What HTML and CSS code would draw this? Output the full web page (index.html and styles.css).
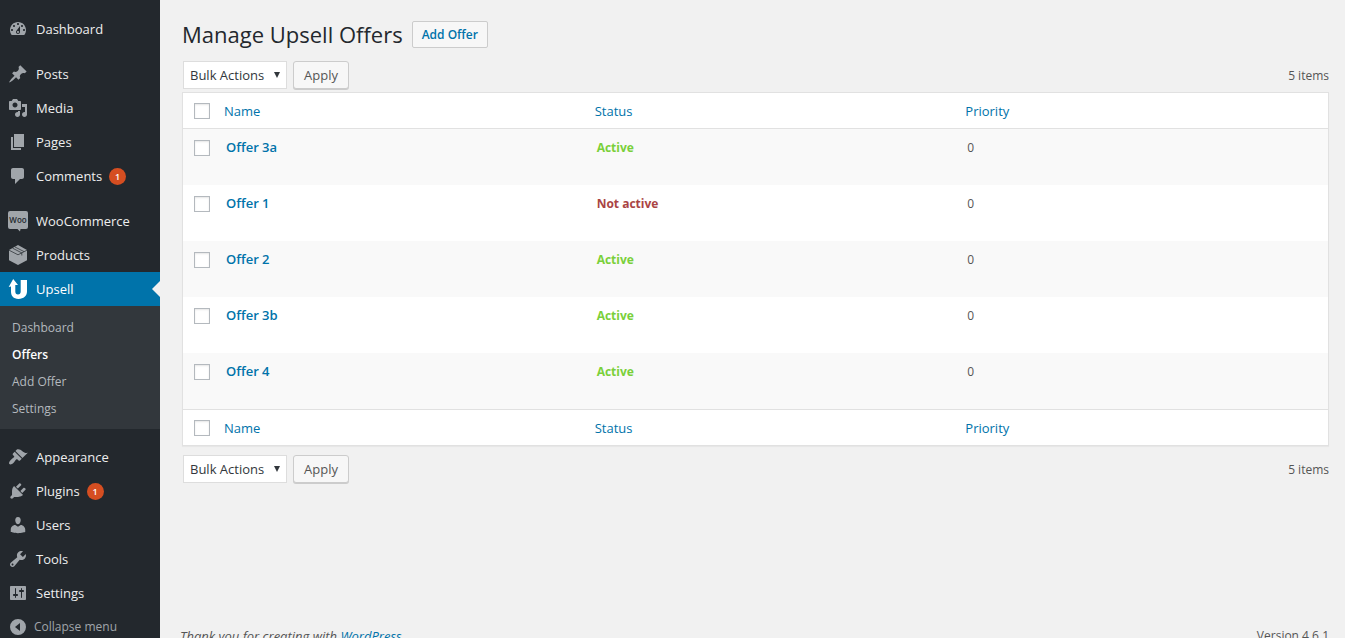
FILE: index.html
```html
<!DOCTYPE html>
<html lang="en">
<head>
<meta charset="utf-8">
<title>Manage Upsell Offers</title>
<link rel="stylesheet" href="styles.css">
</head>
<body>
<div class="admin">
  <nav class="sidebar" aria-label="Main menu">
    <ul class="menu">
      <li><a class="menu-link" href="#"><svg class="icon" viewBox="0 0 20 20"><path d="M3.76 16h12.48c1.1-1.37 1.76-3.11 1.76-5 0-4.42-3.58-8-8-8s-8 3.58-8 8c0 1.89.66 3.63 1.76 5zM10 4c.55 0 1 .45 1 1s-.45 1-1 1-1-.45-1-1 .45-1 1-1zM6 6c.55 0 1 .45 1 1s-.45 1-1 1-1-.45-1-1 .45-1 1-1zm8 0c.55 0 1 .45 1 1s-.45 1-1 1-1-.45-1-1 .45-1 1-1zm-5.37 5.55L12 7v6c0 1.1-.9 2-2 2s-2-.9-2-2c0-.57.24-1.08.63-1.45zM4 10c.55 0 1 .45 1 1s-.45 1-1 1-1-.45-1-1 .45-1 1-1zm12 0c.55 0 1 .45 1 1s-.45 1-1 1-1-.45-1-1 .45-1 1-1zm-5 3c0-.55-.45-1-1-1s-1 .45-1 1 .45 1 1 1 1-.45 1-1z"/></svg>Dashboard</a></li>
      <li class="gap"><a class="menu-link" href="#"><svg class="icon" viewBox="0 0 20 20"><path d="M10.44 3.02l1.82-1.82 6.36 6.35-1.83 1.82c-1.05-.68-2.48-.57-3.41.36l-.75.75c-.92.93-1.04 2.35-.35 3.41l-1.83 1.82-2.41-2.41-2.8 2.79c-.42.42-3.38 2.71-3.8 2.29s1.86-3.39 2.28-3.81l2.79-2.79L4.1 9.36l1.83-1.82c1.05.69 2.48.57 3.4-.36l.75-.75c.93-.92 1.05-2.35.36-3.41z"/></svg>Posts</a></li>
      <li><a class="menu-link" href="#"><svg class="icon" viewBox="0 0 20 20"><path d="M13 11V4c0-.55-.45-1-1-1h-1.670L9 1H5L3.670 3H2c-.55 0-1 .45-1 1v7c0 .55.45 1 1 1h10c.55 0 1-.45 1-1zM7 4.500c1.380 0 2.500 1.120 2.500 2.500S8.380 9.500 7 9.500 4.500 8.380 4.500 7 5.620 4.500 7 4.500zM14 6h5v10.500c0 1.380-1.120 2.500-2.500 2.500S14 17.880 14 16.500s1.120-2.500 2.500-2.500c.17 0 .34.02.5.05V9h-3V6zm-4 8.050V13h2v3.500c0 1.380-1.120 2.500-2.500 2.500S7 17.880 7 16.500 8.120 14 9.500 14c.17 0 .34.02.5.05z"/></svg>Media</a></li>
      <li><a class="menu-link" href="#"><svg class="icon" viewBox="0 0 20 20"><path d="M6 15V2h10v13H6zm-1 1h8v2H3V5h2v11z"/></svg>Pages</a></li>
      <li><a class="menu-link" href="#"><svg class="icon" viewBox="0 0 20 20"><path d="M5 2h9c1.100 0 2 .9 2 2v7c0 1.100-.9 2-2 2h-2l-5 5v-5H5c-1.100 0-2-.9-2-2V4c0-1.100.9-2 2-2z"/></svg>Comments <span class="count">1</span></a></li>
      <li class="gap"><a class="menu-link" href="#"><svg class="icon" viewBox="0 0 20 20"><path d="M2 0h16a2 2 0 0 1 2 2v14a2 2 0 0 1-2 2h-5.500l-.5 2.500L9.500 18H2a2 2 0 0 1-2-2V2a2 2 0 0 1 2-2z"/><text class="woo" x="10" y="12" text-anchor="middle">Woo</text></svg>WooCommerce</a></li>
      <li><a class="menu-link" href="#"><svg class="icon" viewBox="0 0 20 20"><path d="M10 0l9 5v10.200L10 20l-9-4.800V5z"/><path class="icon-line" d="M1 5.200l9 4.600 9-4.600M4.600 3.200l9.200 4.700v2.600M7 2l9 4.600"/></svg>Products</a></li>
      <li><a class="menu-link current" href="#" aria-current="true"><svg class="icon" viewBox="0 0 20 20"><path d="M5.200 0L10 6H7.300v6.600c0 1.800 1 2.900 2.700 2.900s2.700-1.100 2.700-2.900V1H19v11.600c0 4.300-3.300 7.400-8.500 7.400S3 17 3 12.600V7.500L.7 8z"/></svg>Upsell</a>
        <ul class="submenu">
          <li><a href="#">Dashboard</a></li>
          <li><a class="selected" href="#" aria-current="page">Offers</a></li>
          <li><a href="#">Add Offer</a></li>
          <li><a href="#">Settings</a></li>
        </ul>
      </li>
      <li class="gap"><a class="menu-link" href="#"><svg class="icon" viewBox="0 0 20 20"><path d="M14.480 11.060L7.410 3.990l1.500-1.500c.5-.56 2.300-.47 3.510.32 1.210.8 1.430 1.280 2.910 2.100 1.180.64 2.450 1.260 4.450.85zm-.71.71L6.700 4.700 4.930 6.470c-.39.39-.39 1.020 0 1.410l1.060 1.060c.39.39.39 1.030 0 1.420-.6.6-1.430 1.110-2.210 1.690-.35.26-.7.53-1.010.84C1.430 14.230.4 16.080 1.400 17.070c.99 1 2.840-.03 4.180-1.360.31-.31.58-.66.85-1.020.57-.78 1.080-1.610 1.690-2.210.39-.39 1.020-.39 1.410 0l1.060 1.060c.39.39 1.020.39 1.410 0z"/></svg>Appearance</a></li>
      <li><a class="menu-link" href="#"><svg class="icon" viewBox="0 0 20 20"><path d="M13.110 4.360L9.870 7.600 8 5.730l3.240-3.240c.35-.34 1.050-.2 1.560.32.52.51.66 1.210.31 1.550zm-8 1.770l.91-1.120 9.010 9.010-1.190.84c-.71.71-2.630 1.160-3.820 1.160H6.140L4.900 17.260c-.59.59-1.540.59-2.120 0-.59-.58-.59-1.530 0-2.120l1.240-1.240v-3.880c0-1.130.4-3.190 1.090-3.890zm7.260 3.970l3.240-3.240c.34-.35 1.040-.21 1.550.31.52.51.66 1.210.31 1.550l-3.240 3.250z"/></svg>Plugins <span class="count">1</span></a></li>
      <li><a class="menu-link" href="#"><svg class="icon" viewBox="0 0 20 20"><path d="M10 9.250c-2.270 0-2.730-3.440-2.730-3.440C7 4.020 7.820 2 9.970 2c2.160 0 2.980 2.020 2.710 3.810 0 0-.41 3.440-2.680 3.440zm0 2.570L12.720 10c2.390 0 4.520 2.330 4.520 4.530v2.490s-3.650 1.130-7.240 1.130c-3.650 0-7.240-1.130-7.240-1.130v-2.490c0-2.250 1.940-4.480 4.470-4.480z"/></svg>Users</a></li>
      <li><a class="menu-link" href="#"><svg class="icon" viewBox="0 0 20 20"><path d="M16.680 9.770c-1.340 1.340-3.300 1.670-4.950.99l-5.410 6.520c-.99.99-2.590.99-3.580 0s-.99-2.590 0-3.570l6.520-5.420c-.68-1.650-.35-3.610.99-4.950 1.280-1.280 3.120-1.620 4.720-1.060l-2.890 2.890 2.820 2.820 2.860-2.870c.53 1.580.18 3.390-1.080 4.650zM3.810 16.210c.4.39 1.040.39 1.430 0 .4-.4.4-1.040 0-1.430-.39-.4-1.030-.4-1.430 0-.39.39-.39 1.030 0 1.430z"/></svg>Tools</a></li>
      <li><a class="menu-link" href="#"><svg class="icon" viewBox="0 0 20 20"><path d="M18 16V4c0-.55-.45-1-1-1H3c-.55 0-1 .45-1 1v12c0 .55.45 1 1 1h14c.55 0 1-.45 1-1zM8 11h1c.55 0 1 .45 1 1s-.45 1-1 1H8v1.500c0 .28-.22.5-.5.5s-.5-.22-.5-.5V13H6c-.55 0-1-.45-1-1s.45-1 1-1h1V5.500c0-.28.22-.5.5-.5s.5.22.5.5V11zm5-2h-1c-.55 0-1-.45-1-1s.45-1 1-1h1V5.500c0-.28.22-.5.5-.5s.5.22.5.5V7h1c.55 0 1 .45 1 1s-.45 1-1 1h-1v5.500c0 .28-.22.5-.5.5s-.5-.22-.5-.5V9z"/></svg>Settings</a></li>
      <li><button class="menu-link collapse" type="button"><svg class="icon" viewBox="0 0 20 20"><path fill-rule="evenodd" d="M10 2a8 8 0 1 1 0 16 8 8 0 0 1 0-16zM12 6l-5 4 5 4z"/></svg>Collapse menu</button></li>
    </ul>
  </nav>

  <div class="content">
    <main>
      <header class="page-head">
        <h1>Manage Upsell Offers</h1>
        <a class="add-button" href="#">Add Offer</a>
      </header>

      <div class="tablenav">
        <span class="select-box"><select aria-label="Bulk actions, top"><option>Bulk Actions</option></select></span>
        <button class="apply" type="button">Apply</button>
        <span class="total">5 items</span>
      </div>

      <table class="offers">
        <colgroup><col class="col-check"><col><col><col></colgroup>
        <thead>
          <tr><td><input type="checkbox" aria-label="Select all"></td><th scope="col"><a href="#">Name</a></th><th scope="col"><a href="#">Status</a></th><th scope="col"><a href="#">Priority</a></th></tr>
        </thead>
        <tbody>
          <tr><td><input type="checkbox" aria-label="Select Offer 3a"></td><td><a class="name" href="#">Offer 3a</a></td><td><strong class="on">Active</strong></td><td>0</td></tr>
          <tr><td><input type="checkbox" aria-label="Select Offer 1"></td><td><a class="name" href="#">Offer 1</a></td><td><strong class="off">Not active</strong></td><td>0</td></tr>
          <tr><td><input type="checkbox" aria-label="Select Offer 2"></td><td><a class="name" href="#">Offer 2</a></td><td><strong class="on">Active</strong></td><td>0</td></tr>
          <tr><td><input type="checkbox" aria-label="Select Offer 3b"></td><td><a class="name" href="#">Offer 3b</a></td><td><strong class="on">Active</strong></td><td>0</td></tr>
          <tr><td><input type="checkbox" aria-label="Select Offer 4"></td><td><a class="name" href="#">Offer 4</a></td><td><strong class="on">Active</strong></td><td>0</td></tr>
        </tbody>
        <tfoot>
          <tr><td><input type="checkbox" aria-label="Select all, bottom"></td><th scope="col"><a href="#">Name</a></th><th scope="col"><a href="#">Status</a></th><th scope="col"><a href="#">Priority</a></th></tr>
        </tfoot>
      </table>

      <div class="tablenav bottom">
        <span class="select-box"><select aria-label="Bulk actions, bottom"><option>Bulk Actions</option></select></span>
        <button class="apply" type="button">Apply</button>
        <span class="total">5 items</span>
      </div>
    </main>
    <footer class="footer">
      <em>Thank you for creating with <a href="#">WordPress</a>.</em>
      <span>Version 4.6.1</span>
    </footer>
  </div>
</div>
</body>
</html>
```

FILE: styles.css
```css
* { box-sizing: border-box; }

body {
  margin: 0;
  background: #f1f1f1;
  color: #555;
  font: 12px/20px "Open Sans", "Noto Sans", sans-serif;
}

a { color: #0073aa; text-decoration: none; }

.admin { display: flex; height: 100vh; overflow: hidden; }

/* Sidebar */
.sidebar { flex: none; width: 160px; background: #23282d; }
.menu, .submenu { margin: 0; padding: 0; list-style: none; }
.menu { padding-top: 12px; }
.gap { margin-top: 11px; }

.menu-link {
  position: relative;
  display: flex;
  align-items: center;
  gap: 8px;
  width: 100%;
  height: 34px;
  padding: 0 8px;
  border: 0;
  background: none;
  color: #eee;
  font: inherit;
  font-size: 13px;
}
.icon { flex: none; width: 20px; height: 20px; overflow: visible; fill: #a0a5aa; }
.icon-line { fill: none; stroke: #23282d; stroke-width: 0.7; }
.woo { fill: #23282d; font: 600 8px "Open Sans", sans-serif; }

.current { background: #0073aa; color: #fff; }
.current .icon { fill: #fff; }
.current::after {
  content: "";
  position: absolute;
  top: 9px;
  right: 0;
  border: 8px solid transparent;
  border-left: 0;
  border-right-color: #f1f1f1;
}

.count {
  width: 17px;
  margin-left: -1px;
  border-radius: 9px;
  background: #d54e21;
  color: #fff;
  font-size: 9px;
  font-weight: 600;
  line-height: 17px;
  text-align: center;
}
.collapse { gap: 6px; color: #a0a5aa; font-size: 12px; }

.submenu { padding: 8px 0 7px; background: #32373c; }
.submenu a { display: block; padding: 0 12px; color: #b4b9be; line-height: 27px; }
.submenu .selected { color: #fff; font-weight: 600; }

/* Main area */
.content {
  flex: 1;
  display: flex;
  flex-direction: column;
  justify-content: space-between;
  padding: 21px 16px 0 22px;
}

.page-head { display: flex; align-items: center; gap: 9px; }
h1 { margin: 0; color: #23282d; font-size: 22px; font-weight: 400; line-height: 27px; }
.add-button {
  padding: 0 9px;
  border: 1px solid #ccc;
  border-radius: 2px;
  background: #f7f7f7;
  font-weight: 600;
  line-height: 25px;
}

.tablenav { display: flex; align-items: flex-start; gap: 6px; margin: 13px 0 2px; padding-left: 1px; }
.bottom { margin-top: 9px; }
.select-box { position: relative; }
.select-box::after {
  content: "";
  position: absolute;
  top: 11px;
  right: 7px;
  width: 6px;
  height: 6px;
  background: #32373c;
  clip-path: polygon(0 0, 100% 0, 50% 100%);
  pointer-events: none;
}
select {
  display: block;
  appearance: none;
  width: 104px;
  height: 28px;
  padding: 0 6px;
  border: 1px solid #ddd;
  border-radius: 0;
  background: #fff;
  color: #32373c;
  font: inherit;
  font-size: 13px;
}
.apply {
  height: 28px;
  padding: 0 10px;
  border: 1px solid #ccc;
  border-radius: 3px;
  background: #f7f7f7;
  box-shadow: 0 1px 0 #ccc;
  color: #555;
  font: inherit;
  font-size: 13px;
}
.total { margin-left: auto; line-height: 29px; }

.offers {
  width: 100%;
  border: 1px solid #e1e1e1;
  border-spacing: 0;
  table-layout: fixed;
  background: #fff;
  box-shadow: 0 1px 1px rgba(0, 0, 0, 0.04);
}
.col-check { width: 33px; }
th, td { padding: 8px 10px; text-align: left; vertical-align: top; font-weight: 400; }
td + td { vertical-align: baseline; }
th { padding: 8px 8px 7px; font-size: 13px; }
thead th, thead td { border-bottom: 1px solid #e1e1e1; }
tfoot th, tfoot td { border-top: 1px solid #e1e1e1; }
td:first-child { padding: 10px 0 0 11px; }
tbody td:first-child { padding-top: 11px; }
tbody tr { height: 56px; }
tbody tr:nth-child(odd) { background: #f9f9f9; }
.name { font-size: 13px; font-weight: 600; }
.on { color: #7ad03a; }
.off { color: #a44; }

input[type="checkbox"] {
  display: block;
  appearance: none;
  width: 16px;
  height: 16px;
  margin: 0;
  border: 1px solid #b4b9be;
  background: #fff;
  box-shadow: inset 0 1px 2px rgba(0, 0, 0, 0.1);
}

.footer { display: flex; justify-content: space-between; margin: 0 0 -8px -2px; }
.footer em { font-size: 13px; }
```
